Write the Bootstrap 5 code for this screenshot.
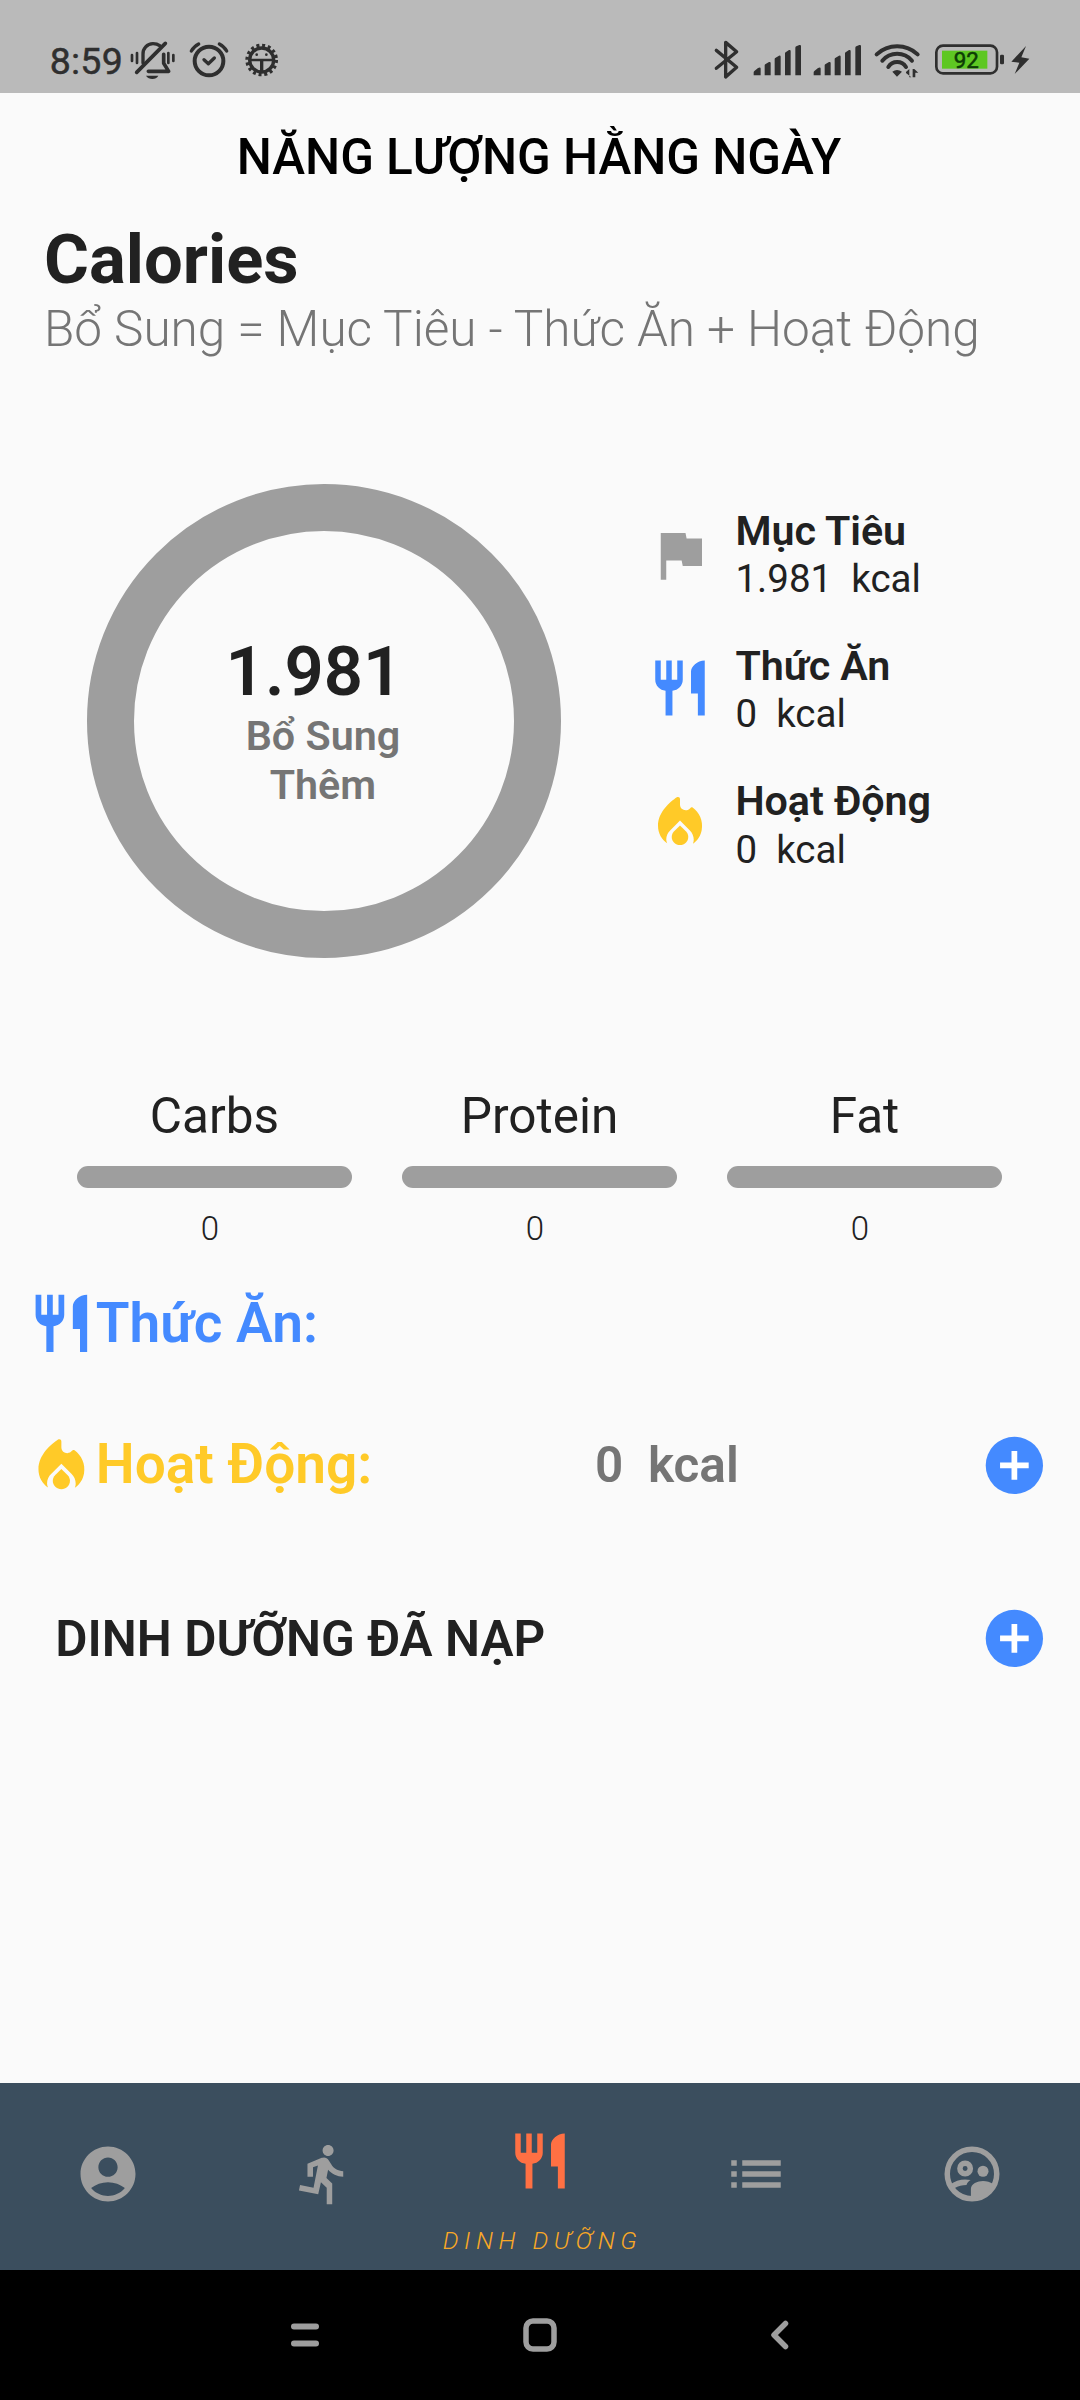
<!DOCTYPE html>
<html lang="vi">
<head>
<meta charset="utf-8">
<meta name="viewport" content="width=device-width, initial-scale=1">
<title>Năng lượng hằng ngày</title>
<link href="https://cdn.jsdelivr.net/npm/bootstrap@5.3.0/dist/css/bootstrap.min.css" rel="stylesheet">
<style>
  body { font-family: Roboto, "Noto Sans", sans-serif; background: #fafafa; color: #212121; }
  svg { display: block; flex: none; }
  .screen { width: 1080px; height: 2400px; }

  /* status bar */
  .statusbar { height: 93px; background: #bababa; padding: 39.3px 48.3px 0 49.8px; color: #2f2f2f; }
  .clock { width: 79.5px; font-size: 37.5px; line-height: 44px; letter-spacing: .2px; -webkit-text-stroke: .5px #2f2f2f; }
  .sicon { fill: #2f2f2f; stroke: none; }
  .sicon .ln { fill: none; stroke: #2f2f2f; stroke-linecap: round; stroke-linejoin: round; }
  .gap-status { gap: 12.5px; }

  /* headings */
  .topbar { height: 127.6px; font-size: 49.5px; font-weight: 500; color: #000; letter-spacing: -.05px; padding-right: 2px; }
  .intro { padding-left: 44px; }
  .intro h1 { font-size: 68.75px; line-height: 77.8px; }
  .formula { font-size: 49.5px; line-height: 62px; font-weight: 300; color: #757575; letter-spacing: -.03px; }

  /* summary */
  .summary { padding: 123.3px 0 0 86.7px; }
  .ring { width: 474.5px; height: 474.5px; border: 47.4px solid #9e9e9e; }
  .ring-value { font-size: 68.75px; line-height: 80px; padding-right: 20px; }
  .ring-label { font-size: 41.25px; line-height: 49.3px; color: #757575; padding-right: 2px; }
  .legend { margin: 23.2px 0 0 86.3px; gap: 39.4px; }
  .legend-item { gap: 22px; }
  .legend-item .ttl { font-size: 41.25px; line-height: 48.3px; letter-spacing: -.08px; }
  .legend-item .val { font-size: 38.5px; line-height: 47.6px; white-space: pre; }
  .raised { margin-bottom: 4.5px; }

  /* macros */
  .macros { padding: 128.4px 78px 0 77px; gap: 50px; }
  .macros .ttl { font-size: 49.5px; line-height: 58px; }
  .macros .progress { height: 22px; border-radius: 11px; margin: 21px 0 22.5px; --bs-progress-bg: #9e9e9e; }
  .macros .val { font-size: 33px; line-height: 38.7px; font-weight: 300; padding-right: 9px; }

  /* rows */
  .entry { height: 68.75px; padding: 0 31.2px 0 27px; margin-top: 40.2px; }
  .entry .ttl { font-size: 55px; letter-spacing: 0; }
  .entry .val { font-size: 49.5px; color: #757575; white-space: pre; padding-top: 1px; }
  .entry .lead-col { width: 568px; }
  .entry .sub { font-size: 49.5px; padding: 2px 0 0 28.3px; }
  .entry-activity { margin-top: 73px; }
  .entry-activity .ttl { padding-bottom: 2px; }
  .entry-activity .flame { margin-top: 2px; }
  .entry-intake { margin-top: 104.2px; }

  .c-blue { color: #448aff; }
  .c-amber { color: #ffca28; }
  .c-grey { color: #9e9e9e; }

  /* bottom bars */
  .tabs { height: 187px; background: #3b4e5e; }
  .tabs .tab { flex: 1 1 0; padding-bottom: 5px; }
  .tabs .tab-on { color: #ff7043; padding: 44.7px 0 0; }
  .tab-label { font-size: 24.75px; line-height: 30px; font-weight: 300; font-style: italic; letter-spacing: 5.5px; color: #f9a825; white-space: nowrap; margin-top: 32px; padding-left: 5px; }
  .sysnav { height: 130px; padding: 0 291px; }
  .home-key { margin-right: 9px; }
</style>
</head>
<body>
<svg width="0" height="0" class="d-none" xmlns="http://www.w3.org/2000/svg">
  <symbol id="fork" viewBox="0 0 24 24"><path fill="currentColor" d="M11 9H9V2H7v7H5V2H3v7c0 2.12 1.66 3.84 3.75 3.97V22h2.5v-9.03C11.34 12.84 13 11.12 13 9V2h-2v7zm5-3v8h2.5v8H21V2c-2.76 0-5 2.24-5 4z"/></symbol>
  <symbol id="fire" viewBox="0 0 24 24"><path fill="currentColor" d="M12 5.3V3.3c0-.7-.6-1-1.15-.65C8.5 4.2 4 8 4 13c0 2.7 1.3 5 3.35 6.4-.25-.5-.35-.95-.35-1.400 0-1.300.5-2.500 1.500-3.400L12 11.100l3.500 3.500c1 .9 1.500 2.200 1.500 3.500 0 .5-.1 1-.3 1.400 1.750-1.200 2.850-3 3.200-5 .6-3.300-.9-6.300-3.300-8.100-.3-.2-.6-.2-.8.1-1.200 1.600-3.800.9-3.800-1.200z"/><path fill="currentColor" d="M12 12.9l-2.13 2.09c-.56.56-.87 1.29-.87 2.07C9 18.68 10.35 20 12 20s3-1.32 3-2.94c0-.78-.31-1.52-.87-2.07z"/></symbol>
  <symbol id="plus" viewBox="0 0 24 24"><circle cx="12" cy="12" r="10" fill="currentColor"/><path fill="#fff" d="M17 13h-4v4h-2v-4H7v-2h4V7h2v4h4z"/></symbol>
  <symbol id="bars" viewBox="140 10 153 125"><path d="M145 119v-9q0-3 3-5l10-8q8-4 8 2v20zM178 119V89q0-3 3-4l10-6q5-1 5 3v37zM208 119V70q0-3 3-4l10-6q5-1 5 3v56zM239 119V53q0-3 3-4l9-6q5-1 5 3v73zM270 119V36q0-3 3-4l9-4q5-1 5 3v88z"/></symbol>
</svg>

<div class="screen d-flex flex-column mx-auto overflow-hidden">
  <header class="statusbar d-flex justify-content-between align-items-start">
    <div class="d-flex">
      <div class="clock">8:59</div>
      <div class="d-flex gap-status">
        <svg class="sicon" width="46.7" height="41.7" viewBox="28 10 140 125"><path class="ln" stroke-width="10" d="M70 82V56a30 30 0 0 1 30-32q12 0 20 6"/><path class="ln" stroke-width="11" d="M137 23L51 110M86 107h61l-15-24V56"/><path class="ln" stroke-width="8" d="M37 58v18M52 52v30M146 52v30M161 58v18"/><path d="M79 120h37q-6 10-18 10t-19-10z"/></svg>
        <svg class="sicon" width="41.7" height="41.7" viewBox="205 10 125 125"><circle class="ln" stroke-width="12" cx="268" cy="76" r="43"/><path class="ln" stroke-width="10" d="M253 72l13 12 18-17M215 46q7-13 22-21M299 25q15 8 22 21"/></svg>
        <svg class="sicon" width="36.7" height="41.7" viewBox="368 10 110 125"><circle class="ln" stroke-width="10" cx="424" cy="73" r="36"/><circle cx="424" cy="73" r="44" fill="none" stroke="#2f2f2f" stroke-width="10" stroke-dasharray="9 8.28"/><path class="ln" stroke-width="8" d="M390 73h68"/><path class="ln" stroke-width="10" d="M424 75v30"/><circle cx="409" cy="57" r="4"/><circle cx="438" cy="57" r="4"/></svg>
      </div>
    </div>
    <div class="d-flex">
      <svg class="sicon" width="38.3" height="41.7" viewBox="25 10 115 125"><path class="ln" stroke-width="10" d="M35 44l61 51-33 29V20l33 28-61 50"/></svg>
      <svg class="sicon" width="51" height="41.7"><use href="#bars"/></svg>
      <svg class="sicon" width="9" height="41.7"></svg>
      <svg class="sicon" width="51" height="41.7"><use href="#bars"/></svg>
      <svg class="sicon" width="71.3" height="41.7" viewBox="473 10 214 125"><g class="ln" stroke-width="12" stroke-linecap="butt"><path d="M514 56A90 90 0 0 1 637 56M531 75A58 58 0 0 1 620 75M549 94A31 31 0 0 1 602 94"/></g><path d="M561 108q14-10 29 0l-15 15zM602 109l10-9v25h6l-16-13zM622 125v-25h5l12 11h-9v14z"/></svg>
      <svg class="sicon" width="97.7" height="41.7" viewBox="687 10 293 125"><rect class="ln" stroke-width="8" x="694" y="30" width="182" height="83" rx="20"/><rect x="711" y="45" width="136" height="54" fill="#5ec722"/><rect x="885" y="57" width="12" height="29" rx="4"/><path d="M963 31l-44 47 24 3-14 34 44-46-24-4z"/><text x="784" y="97" text-anchor="middle" font-family="Roboto" font-size="67" fill="#0d3d05" stroke="#0d3d05" stroke-width="1.5">92</text></svg>
    </div>
  </header>

  <main class="flex-grow-1">
    <div class="topbar d-flex align-items-center justify-content-center">NĂNG LƯỢNG HẰNG NGÀY</div>
    <div class="intro">
      <h1 class="fw-bold m-0">Calories</h1>
      <div class="formula text-nowrap">Bổ Sung = Mục Tiêu - Thức Ăn + Hoạt Động</div>
    </div>

    <section class="summary d-flex align-items-start">
      <div class="ring rounded-circle d-flex flex-column align-items-center justify-content-center text-center">
        <div class="ring-value fw-semibold">1.981</div>
        <div class="ring-label fw-semibold">Bổ Sung<br>Thêm</div>
      </div>
      <div class="legend d-flex flex-column">
        <div class="legend-item d-flex align-items-center">
          <svg class="c-grey" width="66" height="66" viewBox="0 0 24 24"><path fill="currentColor" d="M14.4 6L14 4H5v17h2v-7h5.600l.4 2h7V6z"/></svg>
          <div><div class="ttl fw-semibold">Mục Tiêu</div><div class="val">1.981  kcal</div></div>
        </div>
        <div class="legend-item d-flex align-items-center">
          <svg class="c-blue raised" width="66" height="66"><use href="#fork"/></svg>
          <div><div class="ttl fw-semibold">Thức Ăn</div><div class="val">0  kcal</div></div>
        </div>
        <div class="legend-item d-flex align-items-center">
          <svg class="c-amber raised" width="66" height="66"><use href="#fire"/></svg>
          <div><div class="ttl fw-semibold">Hoạt Động</div><div class="val">0  kcal</div></div>
        </div>
      </div>
    </section>

    <section class="macros d-flex text-center">
      <div class="flex-fill w-100"><div class="ttl">Carbs</div><div class="progress"></div><div class="val">0</div></div>
      <div class="flex-fill w-100"><div class="ttl">Protein</div><div class="progress"></div><div class="val">0</div></div>
      <div class="flex-fill w-100"><div class="ttl">Fat</div><div class="progress"></div><div class="val">0</div></div>
    </section>

    <section class="entry d-flex align-items-center c-blue">
      <svg width="68.75" height="68.75"><use href="#fork"/></svg>
      <div class="ttl fw-semibold">Thức Ăn:</div>
    </section>
    <section class="entry entry-activity d-flex align-items-center">
      <div class="lead-col d-flex align-items-center c-amber">
        <svg class="flame" width="68.75" height="68.75"><use href="#fire"/></svg>
        <div class="ttl fw-semibold">Hoạt Động:</div>
      </div>
      <div class="val fw-semibold">0  kcal</div>
      <svg class="c-blue ms-auto" width="68.75" height="68.75"><use href="#plus"/></svg>
    </section>
    <section class="entry entry-intake d-flex align-items-center">
      <div class="sub fw-semibold">DINH DƯỠNG ĐÃ NẠP</div>
      <svg class="c-blue ms-auto" width="68.75" height="68.75"><use href="#plus"/></svg>
    </section>
  </main>

  <nav class="tabs d-flex c-grey">
    <div class="tab d-flex justify-content-center align-items-center"><svg width="66" height="66" viewBox="0 0 24 24"><path fill="currentColor" d="M12 2C6.48 2 2 6.48 2 12s4.48 10 10 10 10-4.48 10-10S17.52 2 12 2zm0 4c1.93 0 3.5 1.57 3.5 3.5S13.93 13 12 13s-3.5-1.57-3.5-3.5S10.07 6 12 6zm0 14c-2.03 0-4.43-.82-6.14-2.88C7.55 15.8 9.68 15 12 15s4.45.8 6.14 2.12C16.43 19.18 14.03 20 12 20z"/></svg></div>
    <div class="tab d-flex justify-content-center align-items-center"><svg width="66" height="66" viewBox="0 0 24 24"><path fill="currentColor" d="M13.49 5.48c1.1 0 2-.9 2-2s-.9-2-2-2-2 .9-2 2 .9 2 2 2zm-3.6 13.9l1-4.4 2.1 2v6h2v-7.5l-2.1-2 .6-3c1.3 1.5 3.3 2.5 5.5 2.5v-2c-1.9 0-3.5-1-4.3-2.4l-1-1.6c-.4-.6-1-1-1.7-1-.3 0-.5.1-.8.1l-5.2 2.2v4.7h2v-3.4l1.8-.7-1.6 8.1-4.9-1-.4 2 7 1.4z"/></svg></div>
    <div class="tab tab-on d-flex flex-column align-items-center">
      <svg width="66" height="66"><use href="#fork"/></svg>
      <div class="tab-label">DINH DƯỠNG</div>
    </div>
    <div class="tab d-flex justify-content-center align-items-center"><svg width="66" height="66" viewBox="0 0 24 24"><path fill="currentColor" d="M3 13h2v-2H3v2zm0 4h2v-2H3v2zm0-8h2V7H3v2zm4 4h14v-2H7v2zm0 4h14v-2H7v2zM7 7v2h14V7H7z"/></svg></div>
    <div class="tab d-flex justify-content-center align-items-center"><svg width="66" height="66" viewBox="0 0 24 24"><g fill="none" stroke="currentColor" stroke-width="2"><circle cx="12" cy="12" r="9"/><circle cx="9.5" cy="10" r="1.9"/></g><circle cx="16" cy="11" r="2" fill="currentColor"/><path fill="currentColor" d="M4 15.900c1.600-1.200 3.600-1.900 5.500-1.900q1 0 2 .2c-.8.5-1.300 1-1.500 1.800-1.500 0-3 .4-4.400 1.200zM11.600 21v-3.600c0-1.900 2.400-2.900 4.400-2.900 1.300 0 2.700.4 3.600 1.100-1.300 3.200-4 5.400-7.600 5.600z"/></svg></div>
  </nav>

  <footer class="sysnav bg-black d-flex align-items-center justify-content-between c-grey">
    <svg width="28" height="34" viewBox="0 0 28 34" fill="none" stroke="currentColor" stroke-width="6" stroke-linecap="round"><path d="M3 8.500h22M3 25.500h22"/></svg>
    <svg class="home-key" width="34" height="34" viewBox="0 0 34 34" fill="none" stroke="currentColor" stroke-width="5.5"><rect x="3" y="3" width="28" height="28" rx="7"/></svg>
    <svg width="19" height="34" viewBox="0 0 19 34" fill="none" stroke="currentColor" stroke-width="5.5" stroke-linecap="round" stroke-linejoin="round"><path d="M15.500 5.500L4 17l11.500 11.500"/></svg>
  </footer>
</div>
<script src="https://cdn.jsdelivr.net/npm/bootstrap@5.3.0/dist/js/bootstrap.bundle.min.js"></script>
</body>
</html>
